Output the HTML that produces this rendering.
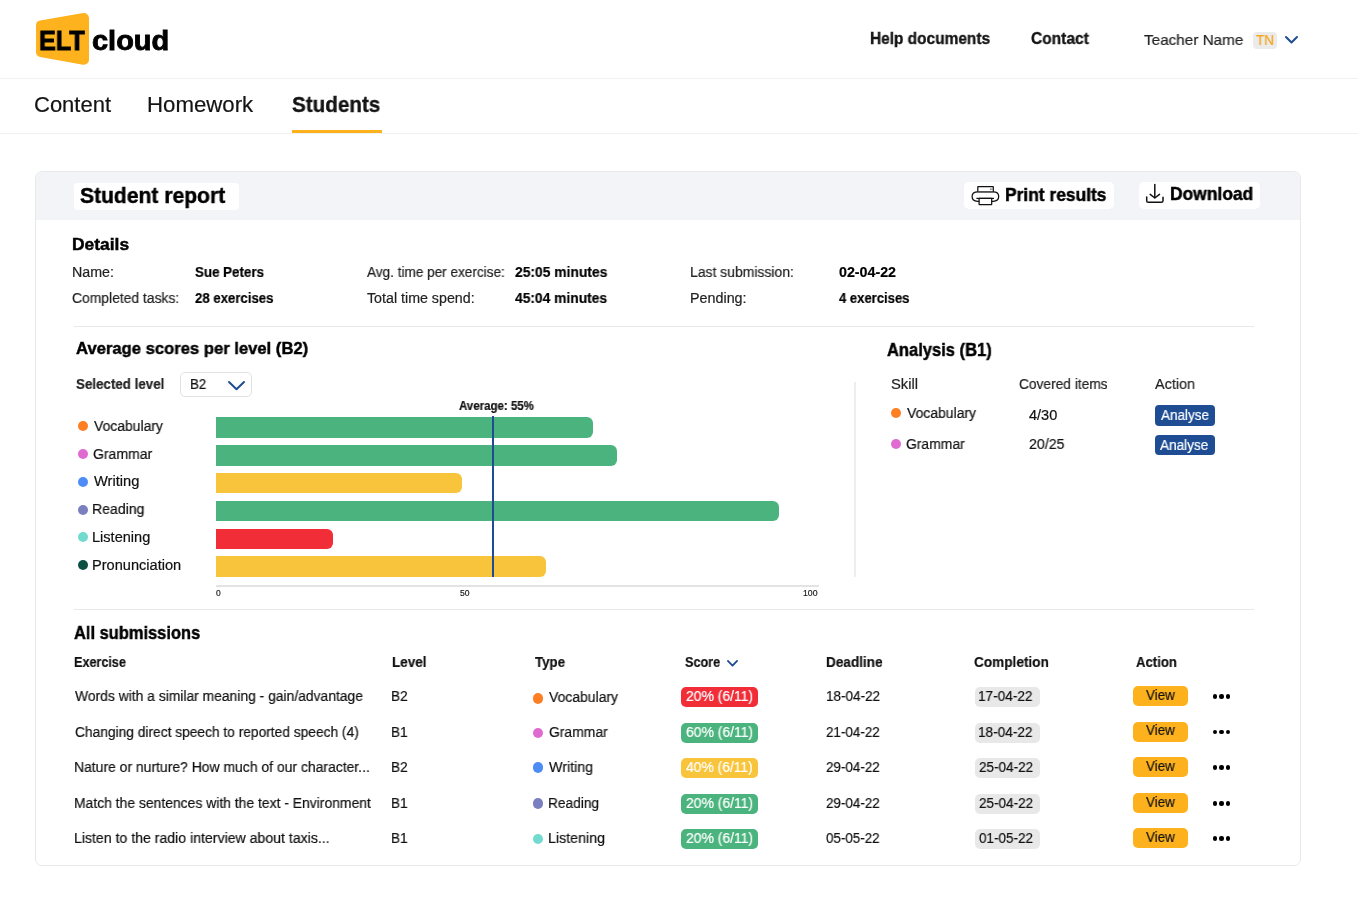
<!DOCTYPE html>
<html><head><meta charset="utf-8"><title>ELT cloud - Student report</title>
<style>
html,body{margin:0;padding:0;background:#fff;width:1358px;height:916px;overflow:hidden}
body{position:relative;font-family:"Liberation Sans",sans-serif;color:#111}
.t{position:absolute;white-space:nowrap;transform-origin:0 0;will-change:transform;-webkit-text-stroke:0.2px currentColor}
.r{position:absolute;box-sizing:border-box}
svg.r{overflow:visible}
</style></head><body>
<svg class="r" style="left:30px;top:8px" width="66" height="64"><path d="M11 17.5 L54 10 L54 51.8 L11 44 Z" transform="translate(0,0)" fill="#fdb21e" stroke="#fdb21e" stroke-width="10" stroke-linejoin="round"/></svg>
<div class="t" style="left:38.96px;top:25.98px;font-size:28.49px;line-height:28.49px;font-weight:bold;color:#000;transform:scaleX(0.8856);-webkit-text-stroke:0.9px #000;">ELT</div>
<div class="t" style="left:92.44px;top:25.81px;font-size:28.46px;line-height:28.46px;font-weight:bold;color:#000;transform:scaleX(1.0170);-webkit-text-stroke:0.9px #000;">cloud</div>
<div class="t" style="left:870.00px;top:30.87px;font-size:15.99px;line-height:15.99px;font-weight:bold;color:#141414;transform:scaleX(0.9657);-webkit-text-stroke:0.35px #141414;">Help documents</div>
<div class="t" style="left:1031.38px;top:30.87px;font-size:15.99px;line-height:15.99px;font-weight:bold;color:#141414;transform:scaleX(0.9714);-webkit-text-stroke:0.35px #141414;">Contact</div>
<div class="t" style="left:1144.29px;top:32.23px;font-size:15.55px;line-height:15.55px;font-weight:normal;color:#222;transform:scaleX(0.9822);">Teacher Name</div>
<div class="r" style="left:1253px;top:32.2px;width:24.00px;height:16.80px;background:#ebebeb;border-radius:4px;"></div>
<div class="t" style="left:1256.03px;top:33.20px;font-size:14.53px;line-height:14.53px;font-weight:normal;color:#f5a623;transform:scaleX(0.9341);">TN</div>
<svg class="r" style="left:1283.2px;top:33.9px" width="17.0" height="11.5"><path d="M3.0 3.0 L8.5 8.5 L14.0 3.0" fill="none" stroke="#1f4c92" stroke-width="2" stroke-linecap="round" stroke-linejoin="round"/></svg>
<div class="r" style="left:0px;top:78.2px;width:1358.00px;height:1.20px;background:#f1f1f1;border-radius:0;"></div>
<div class="t" style="left:33.90px;top:94.14px;font-size:21.22px;line-height:21.22px;font-weight:normal;color:#141414;transform:scaleX(1.0368);">Content</div>
<div class="t" style="left:146.82px;top:94.14px;font-size:21.22px;line-height:21.22px;font-weight:normal;color:#141414;transform:scaleX(1.0467);">Homework</div>
<div class="t" style="left:291.98px;top:94.14px;font-size:21.22px;line-height:21.22px;font-weight:bold;color:#141414;transform:scaleX(0.9716);-webkit-text-stroke:0.35px #141414;">Students</div>
<div class="r" style="left:292px;top:130px;width:90.00px;height:3.00px;background:#fdb21d;border-radius:0;"></div>
<div class="r" style="left:0px;top:132.8px;width:1358.00px;height:1.20px;background:#f1f1f1;border-radius:0;"></div>
<div class="r" style="left:35px;top:171px;width:1266px;height:695px;border:1px solid #e9e9e9;border-radius:7px;background:#fff;overflow:hidden"><div style="position:absolute;left:0;top:0;width:100%;height:47.8px;background:#f3f4f8"></div></div>
<div class="r" style="left:74px;top:183px;width:164.60px;height:26.70px;background:#fff;border-radius:4px;"></div>
<div class="t" style="left:79.57px;top:184.94px;font-size:21.80px;line-height:21.80px;font-weight:bold;color:#000;transform:scaleX(0.9669);-webkit-text-stroke:0.45px #000;">Student report</div>
<div class="r" style="left:964.4px;top:181.8px;width:149.60px;height:27.10px;background:#fff;border-radius:5px;"></div>
<div class="t" style="left:1004.77px;top:186.00px;font-size:18.31px;line-height:18.31px;font-weight:bold;color:#000;transform:scaleX(0.9501);-webkit-text-stroke:0.45px #000;">Print results</div>
<div class="r" style="left:1138.8px;top:182.2px;width:120.90px;height:26.80px;background:#fff;border-radius:5px;"></div>
<div class="t" style="left:1169.87px;top:186.29px;font-size:17.73px;line-height:17.73px;font-weight:bold;color:#000;transform:scaleX(0.9834);-webkit-text-stroke:0.45px #000;">Download</div>
<svg class="r" style="left:970px;top:184px" width="32" height="24"><g fill="none" stroke="#111" stroke-width="1.25" stroke-linejoin="round"><rect x="7.8" y="2.5" width="15.5" height="5.4" rx="0.4"/><path d="M7.8 7.9 H23.3" stroke="#555"/><path d="M9.2 17.3 H7.6 C3.9 17.3 2.1 15.1 2.1 12.6 C2.1 10.0 4.1 7.9 7.8 7.9"/><path d="M21.6 17.3 H23.2 C26.9 17.3 28.7 15.1 28.7 12.6 C28.7 10.0 26.7 7.9 23.3 7.9"/><path d="M6.4 14.4 H24.0"/><rect x="9.1" y="14.4" width="12.6" height="6.2" rx="0.3"/></g><circle cx="20.4" cy="5.1" r="0.55" fill="#333"/><circle cx="21.8" cy="5.1" r="0.55" fill="#333"/></svg>
<svg class="r" style="left:1144px;top:182px" width="22" height="24"><g fill="none" stroke="#111" stroke-width="1.5" stroke-linecap="round" stroke-linejoin="round"><path d="M10.8 2.6 V15.6"/><path d="M6.2 12.4 L10.8 16.0 L15.5 12.4"/><path d="M2.7 14.9 V18.7 Q2.7 20.3 4.3 20.3 H17.4 Q19 20.3 19 18.7 V15.2"/></g></svg>
<div class="t" style="left:71.57px;top:235.80px;font-size:17.01px;line-height:17.01px;font-weight:bold;color:#000;transform:scaleX(1.0242);-webkit-text-stroke:0.45px #000;">Details</div>
<div class="t" style="left:71.57px;top:265.04px;font-size:14.24px;line-height:14.24px;font-weight:normal;color:#222;transform:scaleX(0.9942);">Name:</div>
<div class="t" style="left:195.40px;top:265.04px;font-size:14.24px;line-height:14.24px;font-weight:bold;color:#000;transform:scaleX(0.9361);">Sue Peters</div>
<div class="t" style="left:72.01px;top:291.14px;font-size:14.24px;line-height:14.24px;font-weight:normal;color:#222;transform:scaleX(0.9746);">Completed tasks:</div>
<div class="t" style="left:195.34px;top:291.14px;font-size:14.24px;line-height:14.24px;font-weight:bold;color:#000;transform:scaleX(0.9261);">28 exercises</div>
<div class="t" style="left:366.93px;top:265.04px;font-size:14.24px;line-height:14.24px;font-weight:normal;color:#222;transform:scaleX(0.9537);">Avg. time per exercise:</div>
<div class="t" style="left:514.81px;top:265.04px;font-size:14.24px;line-height:14.24px;font-weight:bold;color:#000;transform:scaleX(0.9730);">25:05 minutes</div>
<div class="t" style="left:366.72px;top:291.14px;font-size:14.24px;line-height:14.24px;font-weight:normal;color:#222;transform:scaleX(0.9995);">Total time spend:</div>
<div class="t" style="left:515.09px;top:291.14px;font-size:14.24px;line-height:14.24px;font-weight:bold;color:#000;transform:scaleX(0.9700);">45:04 minutes</div>
<div class="t" style="left:690.38px;top:265.04px;font-size:14.24px;line-height:14.24px;font-weight:normal;color:#222;transform:scaleX(0.9795);">Last submission:</div>
<div class="t" style="left:838.93px;top:265.04px;font-size:14.24px;line-height:14.24px;font-weight:bold;color:#000;transform:scaleX(1.0011);">02-04-22</div>
<div class="t" style="left:690.35px;top:291.14px;font-size:14.24px;line-height:14.24px;font-weight:normal;color:#222;transform:scaleX(1.0061);">Pending:</div>
<div class="t" style="left:839.30px;top:291.14px;font-size:14.24px;line-height:14.24px;font-weight:bold;color:#000;transform:scaleX(0.9176);">4 exercises</div>
<div class="r" style="left:74px;top:326px;width:1180.00px;height:1.00px;background:#e8e8e8;border-radius:0;"></div>
<div class="t" style="left:75.68px;top:341.05px;font-size:16.72px;line-height:16.72px;font-weight:bold;color:#000;transform:scaleX(0.9950);-webkit-text-stroke:0.45px #000;">Average scores per level (B2)</div>
<div class="t" style="left:76.10px;top:376.80px;font-size:14.53px;line-height:14.53px;font-weight:bold;color:#222;transform:scaleX(0.9198);">Selected level</div>
<div class="r" style="left:179.8px;top:372.2px;width:72.5px;height:25.2px;border:1px solid #e2e2e2;border-radius:5px"></div>
<div class="t" style="left:189.64px;top:378.49px;font-size:13.95px;line-height:13.95px;font-weight:normal;color:#111;transform:scaleX(0.9534);">B2</div>
<svg class="r" style="left:226px;top:378.9px" width="21" height="13.300000000000011"><path d="M3.0 3.0 L10.5 10.300000000000011 L18.0 3.0" fill="none" stroke="#1f4c92" stroke-width="2" stroke-linecap="round" stroke-linejoin="round"/></svg>
<div class="r" style="left:77.80px;top:421.20px;width:10px;height:10px;border-radius:50%;background:#fd7e23"></div>
<div class="t" style="left:93.53px;top:418.90px;font-size:14.53px;line-height:14.53px;font-weight:normal;color:#111;transform:scaleX(0.9596);">Vocabulary</div>
<div class="r" style="left:215.7px;top:417px;width:377.00px;height:21.00px;background:#4bb47e;border-radius:0 6px 6px 0;"></div>
<div class="r" style="left:77.80px;top:448.98px;width:10px;height:10px;border-radius:50%;background:#e06bd0"></div>
<div class="t" style="left:92.90px;top:446.68px;font-size:14.53px;line-height:14.53px;font-weight:normal;color:#111;transform:scaleX(0.9654);">Grammar</div>
<div class="r" style="left:215.7px;top:445px;width:401.00px;height:20.60px;background:#4bb47e;border-radius:0 6px 6px 0;"></div>
<div class="r" style="left:77.80px;top:476.76px;width:10px;height:10px;border-radius:50%;background:#4d8cf5"></div>
<div class="t" style="left:93.53px;top:474.46px;font-size:14.53px;line-height:14.53px;font-weight:normal;color:#111;transform:scaleX(1.0115);">Writing</div>
<div class="r" style="left:215.7px;top:473px;width:246.50px;height:20.20px;background:#f8c43b;border-radius:0 6px 6px 0;"></div>
<div class="r" style="left:77.80px;top:504.54px;width:10px;height:10px;border-radius:50%;background:#7a7fbf"></div>
<div class="t" style="left:92.47px;top:502.24px;font-size:14.53px;line-height:14.53px;font-weight:normal;color:#111;transform:scaleX(0.9686);">Reading</div>
<div class="r" style="left:215.7px;top:501px;width:563.40px;height:20.00px;background:#4bb47e;border-radius:0 6px 6px 0;"></div>
<div class="r" style="left:77.80px;top:532.32px;width:10px;height:10px;border-radius:50%;background:#72dbd0"></div>
<div class="t" style="left:92.43px;top:530.02px;font-size:14.53px;line-height:14.53px;font-weight:normal;color:#111;transform:scaleX(1.0030);">Listening</div>
<div class="r" style="left:215.7px;top:528.6px;width:117.50px;height:20.20px;background:#f12d38;border-radius:0 6px 6px 0;"></div>
<div class="r" style="left:77.80px;top:560.10px;width:10px;height:10px;border-radius:50%;background:#0b5043"></div>
<div class="t" style="left:92.43px;top:557.80px;font-size:14.53px;line-height:14.53px;font-weight:normal;color:#111;transform:scaleX(1.0049);">Pronunciation</div>
<div class="r" style="left:215.7px;top:556.2px;width:330.30px;height:20.60px;background:#f8c43b;border-radius:0 6px 6px 0;"></div>
<div class="r" style="left:491.5px;top:415.6px;width:2.00px;height:161.10px;background:#1f4c92;border-radius:0;"></div>
<div class="t" style="left:459.11px;top:399.96px;font-size:12.21px;line-height:12.21px;font-weight:bold;color:#111;transform:scaleX(0.9398);">Average: 55%</div>
<div class="r" style="left:215.5px;top:585px;width:603.50px;height:2.00px;background:#e3e3e3;border-radius:0;"></div>
<div class="t" style="left:215.56px;top:589.16px;font-size:8.43px;line-height:8.43px;font-weight:normal;color:#222;transform:scaleX(0.9989);">0</div>
<div class="t" style="left:459.86px;top:589.16px;font-size:8.43px;line-height:8.43px;font-weight:normal;color:#222;transform:scaleX(1.0135);">50</div>
<div class="t" style="left:802.75px;top:589.16px;font-size:8.43px;line-height:8.43px;font-weight:normal;color:#222;transform:scaleX(1.0331);">100</div>
<div class="r" style="left:854px;top:382px;width:2.00px;height:194.50px;background:#eeeeee;border-radius:0;"></div>
<div class="t" style="left:887.29px;top:342.04px;font-size:17.44px;line-height:17.44px;font-weight:bold;color:#000;transform:scaleX(0.9472);-webkit-text-stroke:0.45px #000;">Analysis (B1)</div>
<div class="t" style="left:891.14px;top:376.70px;font-size:14.53px;line-height:14.53px;font-weight:normal;color:#222;transform:scaleX(1.0160);">Skill</div>
<div class="t" style="left:1019.01px;top:376.60px;font-size:14.53px;line-height:14.53px;font-weight:normal;color:#222;transform:scaleX(0.9465);">Covered items</div>
<div class="t" style="left:1155.13px;top:376.60px;font-size:14.53px;line-height:14.53px;font-weight:normal;color:#222;transform:scaleX(0.9901);">Action</div>
<div class="r" style="left:891.10px;top:408.00px;width:10px;height:10px;border-radius:50%;background:#fd7e23"></div>
<div class="r" style="left:891.10px;top:439.20px;width:10px;height:10px;border-radius:50%;background:#e06bd0"></div>
<div class="t" style="left:906.93px;top:405.70px;font-size:14.53px;line-height:14.53px;font-weight:normal;color:#111;transform:scaleX(0.9610);">Vocabulary</div>
<div class="t" style="left:906.30px;top:437.00px;font-size:14.53px;line-height:14.53px;font-weight:normal;color:#111;transform:scaleX(0.9571);">Grammar</div>
<div class="t" style="left:1028.64px;top:407.60px;font-size:14.53px;line-height:14.53px;font-weight:normal;color:#111;transform:scaleX(0.9991);">4/30</div>
<div class="t" style="left:1028.59px;top:437.30px;font-size:14.53px;line-height:14.53px;font-weight:normal;color:#111;transform:scaleX(0.9763);">20/25</div>
<div class="r" style="left:1155px;top:405.3px;width:59.60px;height:20.40px;background:#1e4d93;border-radius:4px;"></div>
<div class="r" style="left:1155px;top:435px;width:59.60px;height:20.40px;background:#1e4d93;border-radius:4px;"></div>
<div class="t" style="left:1160.53px;top:407.80px;font-size:14.53px;line-height:14.53px;font-weight:normal;color:#fff;transform:scaleX(0.9304);">Analyse</div>
<div class="t" style="left:1159.83px;top:437.50px;font-size:14.53px;line-height:14.53px;font-weight:normal;color:#fff;transform:scaleX(0.9363);">Analyse</div>
<div class="r" style="left:74px;top:608.5px;width:1180.00px;height:1.00px;background:#e8e8e8;border-radius:0;"></div>
<div class="t" style="left:73.79px;top:624.22px;font-size:18.17px;line-height:18.17px;font-weight:bold;color:#000;transform:scaleX(0.9060);-webkit-text-stroke:0.45px #000;">All submissions</div>
<div class="t" style="left:73.68px;top:654.80px;font-size:14.53px;line-height:14.53px;font-weight:bold;color:#111;transform:scaleX(0.8688);">Exercise</div>
<div class="t" style="left:391.52px;top:654.80px;font-size:14.53px;line-height:14.53px;font-weight:bold;color:#111;transform:scaleX(0.9297);">Level</div>
<div class="t" style="left:534.97px;top:654.80px;font-size:14.53px;line-height:14.53px;font-weight:bold;color:#111;transform:scaleX(0.9163);">Type</div>
<div class="t" style="left:685.32px;top:654.80px;font-size:14.53px;line-height:14.53px;font-weight:bold;color:#111;transform:scaleX(0.8717);">Score</div>
<div class="t" style="left:825.72px;top:654.80px;font-size:14.53px;line-height:14.53px;font-weight:bold;color:#111;transform:scaleX(0.9343);">Deadline</div>
<div class="t" style="left:974.05px;top:654.80px;font-size:14.53px;line-height:14.53px;font-weight:bold;color:#111;transform:scaleX(0.9377);">Completion</div>
<div class="t" style="left:1135.67px;top:654.80px;font-size:14.53px;line-height:14.53px;font-weight:bold;color:#111;transform:scaleX(0.9052);">Action</div>
<svg class="r" style="left:725.3px;top:658.2px" width="15.0" height="10.599999999999909"><path d="M2.9 2.9 L7.5 7.699999999999909 L12.1 2.9" fill="none" stroke="#1f4c92" stroke-width="1.8" stroke-linecap="round" stroke-linejoin="round"/></svg>
<div class="t" style="left:75.33px;top:688.90px;font-size:14.53px;line-height:14.53px;font-weight:normal;color:#111;transform:scaleX(0.9550);">Words with a similar meaning - gain/advantage</div>
<div class="t" style="left:391.31px;top:688.90px;font-size:14.53px;line-height:14.53px;font-weight:normal;color:#111;transform:scaleX(0.9342);">B2</div>
<div class="r" style="left:532.60px;top:693.20px;width:10.4px;height:10.4px;border-radius:50%;background:#fd7e23"></div>
<div class="t" style="left:549.43px;top:690.20px;font-size:14.53px;line-height:14.53px;font-weight:normal;color:#111;transform:scaleX(0.9610);">Vocabulary</div>
<div class="r" style="left:680.9px;top:687px;width:77.00px;height:20.20px;background:#f12d38;border-radius:5px;"></div>
<div class="t" style="left:685.70px;top:688.70px;font-size:14.53px;line-height:14.53px;font-weight:normal;color:#fff;transform:scaleX(0.9593);">20% (6/11)</div>
<div class="t" style="left:825.59px;top:688.70px;font-size:14.53px;line-height:14.53px;font-weight:normal;color:#111;transform:scaleX(0.9304);">18-04-22</div>
<div class="r" style="left:974.6px;top:687px;width:65.40px;height:20.20px;background:#e8e8e8;border-radius:5px;"></div>
<div class="t" style="left:978.38px;top:688.70px;font-size:14.53px;line-height:14.53px;font-weight:normal;color:#111;transform:scaleX(0.9375);">17-04-22</div>
<div class="r" style="left:1133px;top:686.2px;width:54.60px;height:19.90px;background:#fdb21d;border-radius:5px;"></div>
<div class="t" style="left:1145.83px;top:687.80px;font-size:14.53px;line-height:14.53px;font-weight:normal;color:#111;transform:scaleX(0.9205);">View</div>
<div class="r" style="left:1212.60px;top:694.30px;width:4.4px;height:4.4px;border-radius:50%;background:#000"></div>
<div class="r" style="left:1219.20px;top:694.30px;width:4.4px;height:4.4px;border-radius:50%;background:#000"></div>
<div class="r" style="left:1225.70px;top:694.30px;width:4.4px;height:4.4px;border-radius:50%;background:#000"></div>
<div class="t" style="left:74.71px;top:724.80px;font-size:14.53px;line-height:14.53px;font-weight:normal;color:#111;transform:scaleX(0.9480);">Changing direct speech to reported speech (4)</div>
<div class="t" style="left:391.32px;top:724.80px;font-size:14.53px;line-height:14.53px;font-weight:normal;color:#111;transform:scaleX(0.9299);">B1</div>
<div class="r" style="left:532.60px;top:727.80px;width:10.4px;height:10.4px;border-radius:50%;background:#e06bd0"></div>
<div class="t" style="left:548.80px;top:725.00px;font-size:14.53px;line-height:14.53px;font-weight:normal;color:#111;transform:scaleX(0.9571);">Grammar</div>
<div class="r" style="left:680.9px;top:722.7px;width:77.00px;height:19.90px;background:#4bb47e;border-radius:5px;"></div>
<div class="t" style="left:685.70px;top:724.60px;font-size:14.53px;line-height:14.53px;font-weight:normal;color:#fff;transform:scaleX(0.9593);">60% (6/11)</div>
<div class="t" style="left:825.93px;top:724.60px;font-size:14.53px;line-height:14.53px;font-weight:normal;color:#111;transform:scaleX(0.9244);">21-04-22</div>
<div class="r" style="left:974.6px;top:722.7px;width:65.40px;height:19.90px;background:#e8e8e8;border-radius:5px;"></div>
<div class="t" style="left:978.38px;top:724.60px;font-size:14.53px;line-height:14.53px;font-weight:normal;color:#111;transform:scaleX(0.9375);">18-04-22</div>
<div class="r" style="left:1133px;top:721.9px;width:54.60px;height:19.90px;background:#fdb21d;border-radius:5px;"></div>
<div class="t" style="left:1145.83px;top:723.20px;font-size:14.53px;line-height:14.53px;font-weight:normal;color:#111;transform:scaleX(0.9205);">View</div>
<div class="r" style="left:1212.60px;top:729.70px;width:4.4px;height:4.4px;border-radius:50%;background:#000"></div>
<div class="r" style="left:1219.20px;top:729.70px;width:4.4px;height:4.4px;border-radius:50%;background:#000"></div>
<div class="r" style="left:1225.70px;top:729.70px;width:4.4px;height:4.4px;border-radius:50%;background:#000"></div>
<div class="t" style="left:74.28px;top:759.80px;font-size:14.53px;line-height:14.53px;font-weight:normal;color:#111;transform:scaleX(0.9598);">Nature or nurture? How much of our character...</div>
<div class="t" style="left:391.31px;top:759.80px;font-size:14.53px;line-height:14.53px;font-weight:normal;color:#111;transform:scaleX(0.9342);">B2</div>
<div class="r" style="left:532.60px;top:762.30px;width:10.4px;height:10.4px;border-radius:50%;background:#4d8cf5"></div>
<div class="t" style="left:549.43px;top:759.70px;font-size:14.53px;line-height:14.53px;font-weight:normal;color:#111;transform:scaleX(0.9842);">Writing</div>
<div class="r" style="left:680.9px;top:757.9px;width:77.00px;height:20.20px;background:#f8c43b;border-radius:5px;"></div>
<div class="t" style="left:686.05px;top:759.60px;font-size:14.53px;line-height:14.53px;font-weight:normal;color:#fff;transform:scaleX(0.9542);">40% (6/11)</div>
<div class="t" style="left:825.93px;top:759.60px;font-size:14.53px;line-height:14.53px;font-weight:normal;color:#111;transform:scaleX(0.9244);">29-04-22</div>
<div class="r" style="left:974.6px;top:757.9px;width:65.40px;height:20.20px;background:#e8e8e8;border-radius:5px;"></div>
<div class="t" style="left:978.72px;top:759.60px;font-size:14.53px;line-height:14.53px;font-weight:normal;color:#111;transform:scaleX(0.9314);">25-04-22</div>
<div class="r" style="left:1133px;top:757.1px;width:54.60px;height:19.90px;background:#fdb21d;border-radius:5px;"></div>
<div class="t" style="left:1145.83px;top:758.80px;font-size:14.53px;line-height:14.53px;font-weight:normal;color:#111;transform:scaleX(0.9205);">View</div>
<div class="r" style="left:1212.60px;top:765.20px;width:4.4px;height:4.4px;border-radius:50%;background:#000"></div>
<div class="r" style="left:1219.20px;top:765.20px;width:4.4px;height:4.4px;border-radius:50%;background:#000"></div>
<div class="r" style="left:1225.70px;top:765.20px;width:4.4px;height:4.4px;border-radius:50%;background:#000"></div>
<div class="t" style="left:74.29px;top:795.80px;font-size:14.53px;line-height:14.53px;font-weight:normal;color:#111;transform:scaleX(0.9581);">Match the sentences with the text - Environment</div>
<div class="t" style="left:391.32px;top:795.80px;font-size:14.53px;line-height:14.53px;font-weight:normal;color:#111;transform:scaleX(0.9299);">B1</div>
<div class="r" style="left:532.60px;top:798.30px;width:10.4px;height:10.4px;border-radius:50%;background:#7a7fbf"></div>
<div class="t" style="left:548.40px;top:795.60px;font-size:14.53px;line-height:14.53px;font-weight:normal;color:#111;transform:scaleX(0.9436);">Reading</div>
<div class="r" style="left:680.9px;top:794.2px;width:77.00px;height:19.80px;background:#4bb47e;border-radius:5px;"></div>
<div class="t" style="left:685.70px;top:795.60px;font-size:14.53px;line-height:14.53px;font-weight:normal;color:#fff;transform:scaleX(0.9593);">20% (6/11)</div>
<div class="t" style="left:825.93px;top:795.60px;font-size:14.53px;line-height:14.53px;font-weight:normal;color:#111;transform:scaleX(0.9244);">29-04-22</div>
<div class="r" style="left:974.6px;top:794.2px;width:65.40px;height:19.80px;background:#e8e8e8;border-radius:5px;"></div>
<div class="t" style="left:978.72px;top:795.60px;font-size:14.53px;line-height:14.53px;font-weight:normal;color:#111;transform:scaleX(0.9314);">25-04-22</div>
<div class="r" style="left:1133px;top:793.2px;width:54.60px;height:19.80px;background:#fdb21d;border-radius:5px;"></div>
<div class="t" style="left:1145.83px;top:794.90px;font-size:14.53px;line-height:14.53px;font-weight:normal;color:#111;transform:scaleX(0.9205);">View</div>
<div class="r" style="left:1212.60px;top:801.30px;width:4.4px;height:4.4px;border-radius:50%;background:#000"></div>
<div class="r" style="left:1219.20px;top:801.30px;width:4.4px;height:4.4px;border-radius:50%;background:#000"></div>
<div class="r" style="left:1225.70px;top:801.30px;width:4.4px;height:4.4px;border-radius:50%;background:#000"></div>
<div class="t" style="left:74.27px;top:830.90px;font-size:14.53px;line-height:14.53px;font-weight:normal;color:#111;transform:scaleX(0.9716);">Listen to the radio interview about taxis...</div>
<div class="t" style="left:391.32px;top:830.90px;font-size:14.53px;line-height:14.53px;font-weight:normal;color:#111;transform:scaleX(0.9299);">B1</div>
<div class="r" style="left:532.60px;top:833.70px;width:10.4px;height:10.4px;border-radius:50%;background:#72dbd0"></div>
<div class="t" style="left:548.36px;top:830.60px;font-size:14.53px;line-height:14.53px;font-weight:normal;color:#111;transform:scaleX(0.9816);">Listening</div>
<div class="r" style="left:680.9px;top:829.1px;width:77.00px;height:20.30px;background:#4bb47e;border-radius:5px;"></div>
<div class="t" style="left:685.70px;top:830.70px;font-size:14.53px;line-height:14.53px;font-weight:normal;color:#fff;transform:scaleX(0.9593);">20% (6/11)</div>
<div class="t" style="left:826.06px;top:830.70px;font-size:14.53px;line-height:14.53px;font-weight:normal;color:#111;transform:scaleX(0.9220);">05-05-22</div>
<div class="r" style="left:974.6px;top:829.1px;width:65.40px;height:20.30px;background:#e8e8e8;border-radius:5px;"></div>
<div class="t" style="left:978.86px;top:830.70px;font-size:14.53px;line-height:14.53px;font-weight:normal;color:#111;transform:scaleX(0.9291);">01-05-22</div>
<div class="r" style="left:1133px;top:828.2px;width:54.60px;height:20.20px;background:#fdb21d;border-radius:5px;"></div>
<div class="t" style="left:1145.83px;top:829.80px;font-size:14.53px;line-height:14.53px;font-weight:normal;color:#111;transform:scaleX(0.9205);">View</div>
<div class="r" style="left:1212.60px;top:836.40px;width:4.4px;height:4.4px;border-radius:50%;background:#000"></div>
<div class="r" style="left:1219.20px;top:836.40px;width:4.4px;height:4.4px;border-radius:50%;background:#000"></div>
<div class="r" style="left:1225.70px;top:836.40px;width:4.4px;height:4.4px;border-radius:50%;background:#000"></div>
</body></html>
